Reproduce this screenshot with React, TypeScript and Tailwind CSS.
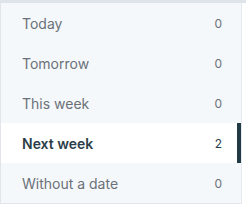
import React from 'react'

const items = [
  { label: 'Today', count: 0 },
  { label: 'Tomorrow', count: 0 },
  { label: 'This week', count: 0 },
  { label: 'Next week', count: 2, active: true },
  { label: 'Without a date', count: 0 },
]

export default function App() {
  return (
    <div className="h-[205px] w-[246px] bg-white font-['Inter',sans-serif]">
      <div className="h-[3px] bg-[#dfe4ea]" />
      <div className="flex">
        <ul className="w-[241px] border-b border-l border-[#e1e5ea] bg-[#f5f8fb]">
          {items.map((it) => (
            <li
              key={it.label}
              className={`relative flex h-10 items-center justify-between pl-[21px] pr-[19px] text-[14px] ${
                it.active ? 'bg-white font-semibold text-[#2b3d49]' : 'text-[#6b7178]'
              }`}
            >
              <span className="pt-px">{it.label}</span>
              <span className="pt-px text-[12px] font-normal">{it.count}</span>
              {it.active && <span className="absolute right-0 top-0 h-full w-1 bg-[#213a44]" />}
            </li>
          ))}
        </ul>
        <div className="flex-1 border-l border-[#e6e9ed]" />
      </div>
    </div>
  )
}
